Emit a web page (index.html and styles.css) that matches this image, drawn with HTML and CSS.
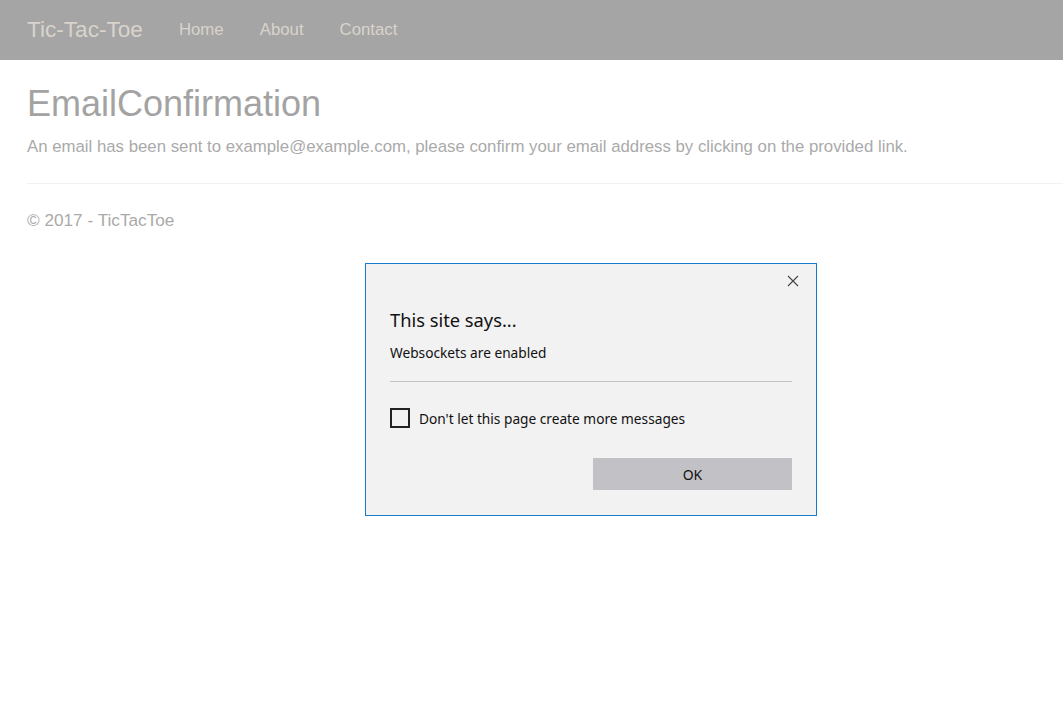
FILE: index.html
```html
<!DOCTYPE html>
<html>
<head>
<meta charset="utf-8">
<link rel="stylesheet" href="styles.css">
</head>
<body>
<header class="navbar">
  <span class="brand">Tic-Tac-Toe</span>
  <nav class="nav">
    <span class="nav-link">Home</span>
    <span class="nav-link">About</span>
    <span class="nav-link">Contact</span>
  </nav>
</header>
<main class="content">
  <h1 class="title">EmailConfirmation</h1>
  <p class="message">An email has been sent to example@example.com, please confirm your email address by clicking on the provided link.</p>
  <hr class="rule">
  <footer class="footer">© 2017 - TicTacToe</footer>
</main>
<div class="dialog">
  <div class="dialog-close">
    <svg width="12" height="12" viewBox="0 0 12 12"><path d="M1 1L11 11M11 1L1 11" stroke="#444" stroke-width="1.1" fill="none"/></svg>
  </div>
  <div class="dialog-title">This site says...</div>
  <div class="dialog-text">Websockets are enabled</div>
  <div class="dialog-sep"></div>
  <label class="dialog-check"><span class="box"></span><span>Don't let this page create more messages</span></label>
  <div class="dialog-actions"><span class="ok">OK</span></div>
</div>
</body>
</html>
```
FILE: styles.css
```css
html, body { margin: 0; padding: 0; background: #fff; }
body { font-family: "Liberation Sans", Arial, sans-serif; }
.navbar {
  height: 60px;
  background: #a5a5a5;
  display: flex;
  align-items: center;
  padding-left: 27px;
}
.brand { font-size: 22.6px; color: #d9d3cb; margin-right: 36px; }
.nav { display: flex; gap: 36px; }
.nav-link { font-size: 16.8px; color: #d9d3cb; }
.content { padding: 0 0 0 27px; }
.title {
  margin: 24px 0 0;
  font-size: 36px;
  font-weight: 400;
  line-height: 40px;
  color: #a3a3a3;
}
.message { margin: 12px 0 0; font-size: 16.8px; line-height: 22px; color: #aaa; }
.rule { border: 0; border-top: 1px solid #f2f2f2; margin: 25px 0 0; }
.footer { margin-top: 26px; font-size: 17.2px; color: #aaa; }
.dialog {
  position: absolute;
  left: 365px;
  top: 263px;
  height: 251px;
  border: 1px solid #1979ca;
  background: #f2f2f2;
  font-family: "Noto Sans", "Open Sans", sans-serif;
  color: #111;
  box-sizing: content-box;
  padding: 0 24px;
  width: 402px;
}
.dialog-close { display: flex; justify-content: flex-end; padding: 11px 0 0; margin-right: -7px; height: 12px; }
.dialog-title { margin-top: 20px; font-size: 18.3px; line-height: 26px; }
.dialog-text { margin-top: 10px; font-size: 13.7px; line-height: 20px; }
.dialog-sep { margin-top: 18px; border-top: 1px solid #c4c4c4; width: 402px; }
.dialog-check { display: flex; align-items: center; gap: 9px; margin-top: 26px; font-size: 13.7px; }
.box { width: 16px; height: 16px; border: 2px solid #222; box-sizing: content-box; }
.dialog-actions { display: flex; justify-content: flex-end; margin-top: 30px; }
.ok {
  width: 199px; height: 32px;
  background: #c2c2c6;
  display: flex; align-items: center; justify-content: center;
  font-size: 14px;
}
```
